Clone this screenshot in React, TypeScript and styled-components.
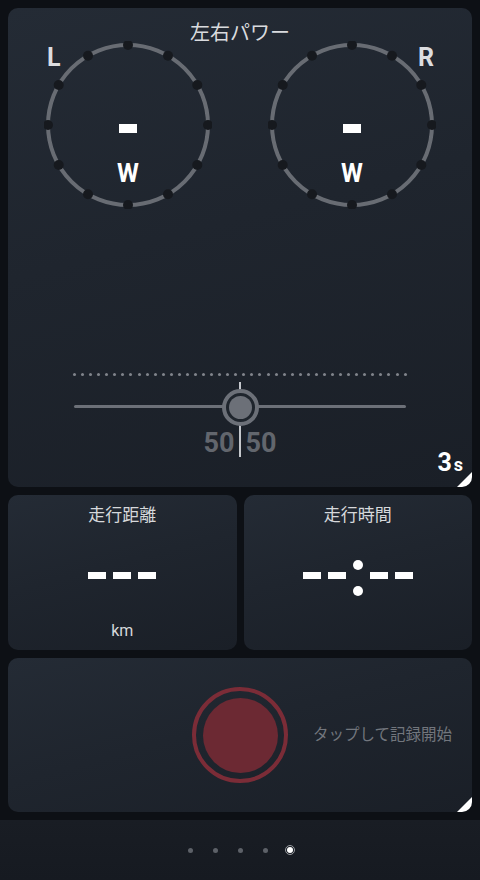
import React from "react";
import styled, { createGlobalStyle } from "styled-components";

const GlobalStyle = createGlobalStyle`
  html, body {
    margin: 0;
    padding: 0;
    background: #0d1015;
  }
  body {
    font-family: Roboto, "Noto Sans CJK JP", sans-serif;
    color: #d6d8db;
  }
  * { box-sizing: border-box; }
`;

const Screen = styled.div`
  width: 480px;
  height: 880px;
  display: flex;
  flex-direction: column;
  background: #0d1015;
  overflow: hidden;
`;

const Content = styled.div`
  display: flex;
  flex-direction: column;
  gap: 8px;
  padding: 8px 8px 0;
`;

const Card = styled.section<{ $h: number }>`
  position: relative;
  height: ${(p) => p.$h}px;
  border-radius: 10px;
  overflow: hidden;
  background: linear-gradient(165deg, #242b35 0%, #1f252e 45%, #1a1f27 100%);
`;

const PowerPanel = styled(Card)`
  display: flex;
  flex-direction: column;
  align-items: center;
`;

const PanelTitle = styled.h2`
  margin: 0;
  padding-top: 13px;
  font-size: 20px;
  line-height: 24px;
  font-weight: 400;
  color: #d9dbde;
`;

const GaugeRow = styled.div`
  width: 100%;
  margin-top: -4px;
  padding: 0 36px;
  display: flex;
  justify-content: space-between;
`;

const Gauge = styled.div`
  position: relative;
  width: 168px;
  height: 168px;
`;

const Ring = styled.svg`
  display: block;
  width: 168px;
  height: 168px;
`;

const SideLabel = styled.span<{ $side: "L" | "R" }>`
  position: absolute;
  top: 4px;
  left: ${(p) => (p.$side === "L" ? "3px" : "150px")};
  font-size: 25px;
  line-height: 25px;
  font-weight: 700;
  color: #dcdde0;
`;

const Readout = styled.div`
  position: absolute;
  inset: 0;
  display: flex;
  flex-direction: column;
  align-items: center;
  padding-top: 83px;
`;

const Dash = styled.span<{ $h?: number }>`
  display: block;
  width: 18px;
  height: ${(p) => p.$h ?? 9}px;
  background: #ffffff;
`;

const Unit = styled.span`
  margin-top: 28px;
  font-size: 25px;
  line-height: 25px;
  font-weight: 700;
  color: #ffffff;
`;

const Slider = styled.div`
  position: relative;
  width: 334px;
  margin-top: 164px;
`;

const TickRow = styled.div`
  height: 3px;
  display: flex;
  justify-content: space-between;
`;

const Tick = styled.span`
  width: 3px;
  height: 3px;
  border-radius: 50%;
  background: #80848b;
`;

const TrackWrap = styled.div`
  position: relative;
  height: 38px;
  margin-top: 12px;
  display: flex;
  align-items: center;
  justify-content: center;
`;

const Track = styled.div`
  position: absolute;
  left: 1px;
  right: 1px;
  top: 17px;
  height: 3px;
  border-radius: 2px;
  background: #6c7078;
`;

const Thumb = styled.div`
  position: relative;
  z-index: 2;
  width: 37px;
  height: 37px;
  border-radius: 50%;
  border: 4px solid #6c7078;
  background: #1f252d;
  display: flex;
  align-items: center;
  justify-content: center;
`;

const ThumbCore = styled.div`
  width: 23px;
  height: 23px;
  border-radius: 50%;
  background: #6c7078;
`;

const Divider = styled.div`
  position: absolute;
  z-index: 1;
  left: 166px;
  top: 9px;
  width: 2px;
  height: 75px;
  background: #c4c7cc;
`;

const Balance = styled.div`
  display: flex;
  margin-top: 2px;
`;

const BalanceValue = styled.span<{ $side: "left" | "right" }>`
  flex: 1;
  text-align: ${(p) => (p.$side === "left" ? "right" : "left")};
  padding-${(p) => (p.$side === "left" ? "right" : "left")}: ${(p) =>
    p.$side === "left" ? 6 : 5}px;
  font-size: 27px;
  line-height: 30px;
  font-weight: 700;
  color: #62666d;
`;

const Interval = styled.div`
  position: absolute;
  right: 9px;
  bottom: 10px;
  display: flex;
  align-items: baseline;
  color: #ffffff;
  font-weight: 700;
  line-height: 25px;
`;

const IntervalNum = styled.span`
  font-size: 25px;
`;

const IntervalUnit = styled.span`
  font-size: 18px;
  margin-left: 2px;
`;

const CornerMark = styled.span`
  position: absolute;
  right: 0;
  bottom: 0;
  width: 15px;
  height: 15px;
  background: #ffffff;
  clip-path: polygon(100% 0, 100% 100%, 0 100%);
  border-top-left-radius: 2px;
`;

const StatRow = styled.div`
  display: grid;
  grid-template-columns: 1fr 1fr;
  gap: 7px;
`;

const StatCard = styled(Card)`
  display: grid;
  grid-template-rows: 24px 40px 20px;
  justify-items: center;
  padding-top: 8px;
`;

const StatTitle = styled.h3`
  margin: 0;
  font-size: 17px;
  line-height: 24px;
  font-weight: 400;
  color: #d6d8db;
`;

const StatValue = styled.div`
  margin-top: 28px;
  height: 40px;
  display: flex;
  align-items: center;
  gap: 7px;
`;

const Colon = styled.span`
  width: 10px;
  height: 36px;
  margin-top: 6px;
  display: flex;
  flex-direction: column;
  justify-content: space-between;
  &::before,
  &::after {
    content: "";
    width: 10px;
    height: 10px;
    border-radius: 50%;
    background: #ffffff;
  }
`;

const StatUnit = styled.span`
  margin-top: 54px;
  font-size: 16px;
  line-height: 20px;
  color: #d6d8db;
`;

const RecordCard = styled(Card)`
  display: grid;
  grid-template-columns: 1fr auto 1fr;
  align-items: center;
`;

const RecordButton = styled.button`
  grid-column: 2;
  width: 96px;
  height: 96px;
  padding: 0;
  border-radius: 50%;
  border: 4px solid #7b2c37;
  background: transparent;
  display: flex;
  align-items: center;
  justify-content: center;
  cursor: pointer;
`;

const RecordCore = styled.span`
  width: 75px;
  height: 75px;
  border-radius: 50%;
  background: #6c2933;
`;

const RecordHint = styled.span`
  padding-left: 25px;
  font-size: 15.5px;
  line-height: 22px;
  color: #72767d;
  white-space: nowrap;
`;

const PagerBar = styled.nav`
  margin-top: 8px;
  height: 60px;
  background: linear-gradient(180deg, #191d24 0%, #161a21 100%);
  display: flex;
  align-items: center;
  justify-content: center;
  gap: 15px;
`;

const PageDot = styled.span<{ $active?: boolean }>`
  width: 10px;
  height: 10px;
  border-radius: 50%;
  display: flex;
  align-items: center;
  justify-content: center;
  border: 1px solid ${(p) => (p.$active ? "#9a9da2" : "transparent")};
  &::after {
    content: "";
    width: ${(p) => (p.$active ? 6 : 5)}px;
    height: ${(p) => (p.$active ? 6 : 5)}px;
    border-radius: 50%;
    background: ${(p) => (p.$active ? "#ffffff" : "#5d6168")};
  }
`;

const GaugeRing: React.FC = () => {
  const dots = Array.from({ length: 12 }, (_, i) => {
    const a = (i * Math.PI) / 6;
    return { x: 84 + 80 * Math.sin(a), y: 84 - 80 * Math.cos(a) };
  });
  return (
    <Ring viewBox="0 0 168 168">
      <circle cx="84" cy="84" r="80" fill="none" stroke="#686c73" strokeWidth="4" />
      {dots.map((d, i) => (
        <circle key={i} cx={d.x} cy={d.y} r="5" fill="#16191e" />
      ))}
    </Ring>
  );
};

const PowerGauge: React.FC<{ side: "L" | "R" }> = ({ side }) => (
  <Gauge>
    <GaugeRing />
    <SideLabel $side={side}>{side}</SideLabel>
    <Readout>
      <Dash aria-label="-" />
      <Unit>W</Unit>
    </Readout>
  </Gauge>
);

export default function App() {
  const ticks = Array.from({ length: 42 });
  return (
    <>
      <GlobalStyle />
      <Screen>
        <Content>
          <PowerPanel $h={479}>
            <PanelTitle>左右パワー</PanelTitle>
            <GaugeRow>
              <PowerGauge side="L" />
              <PowerGauge side="R" />
            </GaugeRow>
            <Slider>
              <TickRow>
                {ticks.map((_, i) => (
                  <Tick key={i} />
                ))}
              </TickRow>
              <TrackWrap>
                <Track />
                <Thumb>
                  <ThumbCore />
                </Thumb>
              </TrackWrap>
              <Divider />
              <Balance>
                <BalanceValue $side="left">50</BalanceValue>
                <BalanceValue $side="right">50</BalanceValue>
              </Balance>
            </Slider>
            <Interval>
              <IntervalNum>3</IntervalNum>
              <IntervalUnit>s</IntervalUnit>
            </Interval>
            <CornerMark />
          </PowerPanel>

          <StatRow>
            <StatCard $h={155}>
              <StatTitle>走行距離</StatTitle>
              <StatValue aria-label="---">
                <Dash $h={7} />
                <Dash $h={7} />
                <Dash $h={7} />
              </StatValue>
              <StatUnit>km</StatUnit>
            </StatCard>
            <StatCard $h={155}>
              <StatTitle>走行時間</StatTitle>
              <StatValue aria-label="--:--">
                <Dash $h={7} />
                <Dash $h={7} />
                <Colon />
                <Dash $h={7} />
                <Dash $h={7} />
              </StatValue>
            </StatCard>
          </StatRow>

          <RecordCard $h={154}>
            <RecordButton aria-label="record">
              <RecordCore />
            </RecordButton>
            <RecordHint>タップして記録開始</RecordHint>
            <CornerMark />
          </RecordCard>
        </Content>
        <PagerBar>
          <PageDot />
          <PageDot />
          <PageDot />
          <PageDot />
          <PageDot $active />
        </PagerBar>
      </Screen>
    </>
  );
}
